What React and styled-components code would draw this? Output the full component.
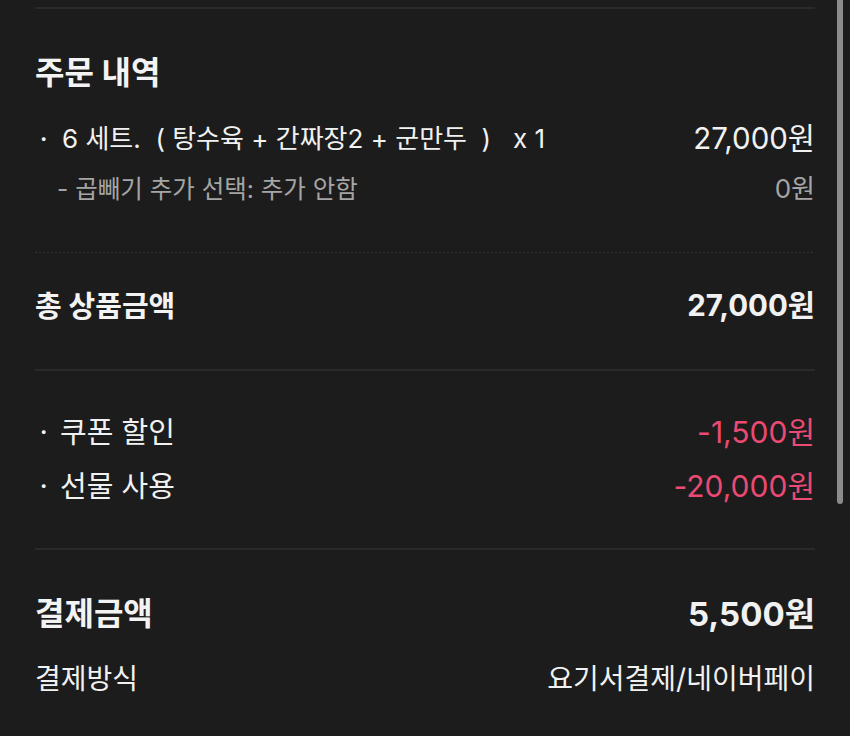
import React from "react";
import styled, { createGlobalStyle } from "styled-components";

const Global = createGlobalStyle`
  html, body {
    margin: 0;
    padding: 0;
    background: #1c1c1c;
  }
  body {
    font-family: "Inter", "Noto Sans CJK KR", sans-serif;
    color: #f1f1f1;
    -webkit-font-smoothing: antialiased;
  }
`;

const Screen = styled.div`
  position: relative;
  width: 850px;
  height: 736px;
  overflow: hidden;
  background: #1c1c1c;
`;

const Content = styled.div`
  padding: 0 35px;
`;

const Divider = styled.div`
  height: ${(p) => (p.$thick ? 2 : 1)}px;
  margin-top: ${(p) => p.$top || 0}px;
  ${(p) =>
    p.$dotted
      ? `background-image: linear-gradient(to right, #343434 50%, transparent 50%); background-size: 4px 1px;`
      : `background: #2a2a2a;`}
`;

const Section = styled.section`
  display: flex;
  flex-direction: column;
  padding-top: ${(p) => p.$pt}px;
  padding-bottom: ${(p) => p.$pb}px;
`;

const Row = styled.div`
  display: flex;
  align-items: center;
  justify-content: space-between;
  height: ${(p) => p.$h}px;
  margin-top: ${(p) => p.$mt || 0}px;
`;

const Title = styled.h2`
  margin: 0;
  font-size: ${(p) => p.$size || 32}px;
  font-weight: 700;
  color: #f3f3f3;
  line-height: 1;
`;

const Label = styled.span`
  display: flex;
  align-items: center;
  font-size: ${(p) => p.$size}px;
  font-weight: 400;
  color: ${(p) => (p.$muted ? "#a5a5a5" : "#f1f1f1")};
  white-space: pre;
  line-height: 1;
`;

const Bullet = styled.span`
  display: inline-block;
  width: ${(p) => p.$w || 27}px;
  padding-left: 5px;
  box-sizing: border-box;
  font-size: 22px;
  font-weight: 700;
`;

const Amount = styled.span`
  font-size: ${(p) => p.$size}px;
  font-weight: ${(p) => (p.$bold ? 700 : 400)};
  color: ${(p) =>
    p.$tone === "discount" ? "#ea4a73" : p.$tone === "muted" ? "#a5a5a5" : "#f1f1f1"};
  line-height: 1;
  white-space: pre;
`;

const SubIndent = styled.span`
  padding-left: 22px;
`;

const Scrollbar = styled.div`
  position: absolute;
  top: -6px;
  right: 7px;
  width: 6px;
  height: 510px;
  border-radius: 3px;
  background: #8c8c8c;
`;

export default function App() {
  return (
    <>
      <Global />
      <Screen>
        <Content>
          <Divider $top={7} $thick />
          <Section $pt={44} $pb={47}>
            <Row $h={40}>
              <Title $size={32}>주문 내역</Title>
            </Row>
            <Row $h={36} $mt={28}>
              <Label $size={26}>
                <Bullet>·</Bullet>
                {"6 세트.  ( 탕수육 + 간짜장2 + 군만두  )   x 1"}
              </Label>
              <Amount $size={29.5}>27,000원</Amount>
            </Row>
            <Row $h={32} $mt={16}>
              <Label $size={24.5} $muted>
                <SubIndent>- 곱빼기 추가 선택: 추가 안함</SubIndent>
              </Label>
              <Amount $size={26} $tone="muted">0원</Amount>
            </Row>
          </Section>
          <Divider $dotted />
          <Section $pt={33} $pb={43}>
            <Row $h={40}>
              <Title $size={29}>총 상품금액</Title>
              <Amount $size={29.5} $bold>27,000원</Amount>
            </Row>
          </Section>
          <Divider $thick />
          <Section $pt={43} $pb={44}>
            <Row $h={36}>
              <Label $size={29}>
                <Bullet $w={25}>·</Bullet>쿠폰 할인
              </Label>
              <Amount $size={30} $tone="discount">-1,500원</Amount>
            </Row>
            <Row $h={36} $mt={18}>
              <Label $size={29}>
                <Bullet $w={25}>·</Bullet>선물 사용
              </Label>
              <Amount $size={30} $tone="discount">-20,000원</Amount>
            </Row>
          </Section>
          <Divider $thick />
          <Section $pt={44} $pb={40}>
            <Row $h={40}>
              <Title $size={32}>결제금액</Title>
              <Amount $size={33} $bold>5,500원</Amount>
            </Row>
            <Row $h={36} $mt={27}>
              <Label $size={28}>결제방식</Label>
              <Amount $size={28}>요기서결제/네이버페이</Amount>
            </Row>
          </Section>
        </Content>
        <Scrollbar />
      </Screen>
    </>
  );
}
